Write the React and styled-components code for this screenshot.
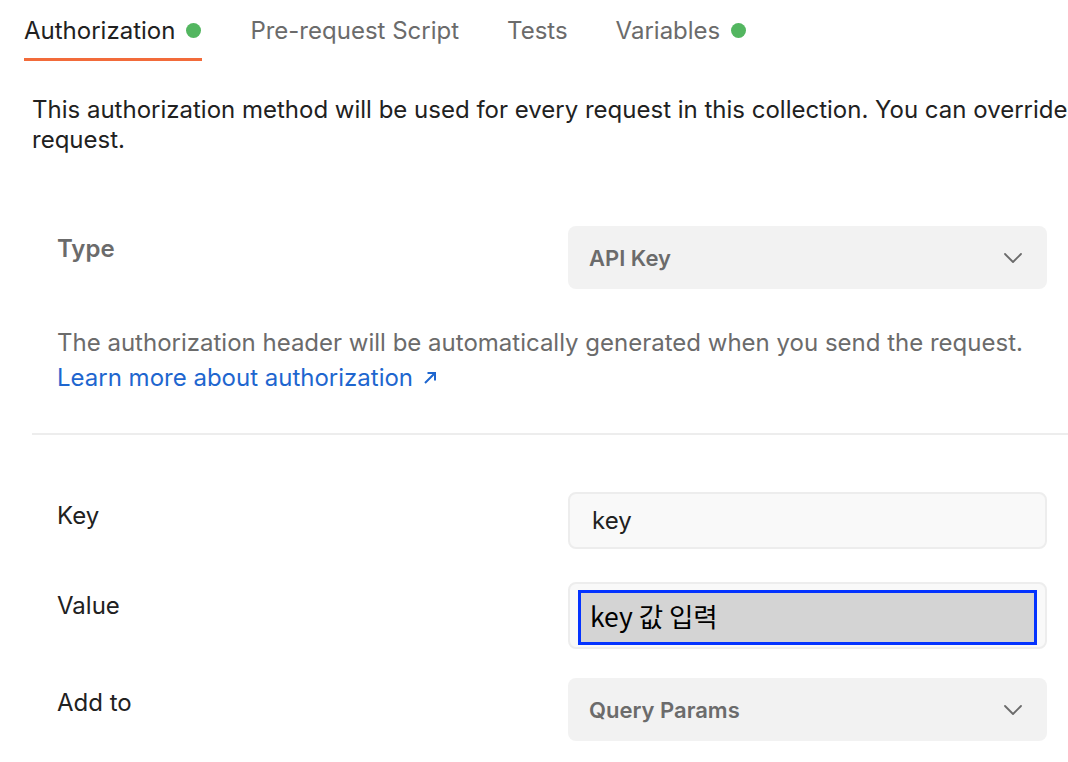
import React from "react";
import styled, { createGlobalStyle } from "styled-components";

const Global = createGlobalStyle`
  html, body { margin: 0; padding: 0; background: #ffffff; }
  body { overflow: hidden; width: 1068px; height: 762px; font-family: Inter, "Noto Sans", sans-serif; }
  * { box-sizing: border-box; }
`;

const Page = styled.div`
  width: 1068px;
  height: 762px;
  overflow: hidden;
  display: flex;
  flex-direction: column;
  color: #212121;
`;

const TabBar = styled.div`
  display: flex;
  align-items: flex-start;
  padding-left: 24px;
  height: 61px;
  gap: 48px;
`;

const Tab = styled.div`
  display: flex;
  align-items: center;
  gap: 11px;
  height: 61px;
  padding-top: 3px;
  padding-right: ${(p) => (p.$active ? 1 : 0)}px;
  font-size: 24px;
  color: ${(p) => (p.$active ? "#212121" : "#6b6b6b")};
  border-bottom: 3px solid ${(p) => (p.$active ? "#f26b3a" : "transparent")};
`;

const Dot = styled.span`
  width: 15px;
  height: 15px;
  border-radius: 50%;
  background: #53b660;
  flex: none;
`;

const Description = styled.div`
  margin-top: 34px;
  padding-left: 32px;
  font-size: 24px;
  line-height: 30px;
  white-space: nowrap;
  color: #212121;
`;

const Section = styled.div`
  margin-left: 32px;
  display: flex;
  flex-direction: column;
`;

const Row = styled.div`
  display: grid;
  grid-template-columns: 511px 479px;
  padding-left: 25px;
  margin-top: ${(p) => p.$mt || 0}px;
  align-items: start;
`;

const Label = styled.div`
  font-size: 24px;
  line-height: 30px;
  padding-top: ${(p) => p.$pt || 10}px;
  font-weight: ${(p) => (p.$bold ? 600 : 400)};
  color: ${(p) => (p.$bold ? "#6b6b6b" : "#212121")};
`;

const Select = styled.div`
  height: 63px;
  border-radius: 8px;
  background: #f2f2f2;
  display: flex;
  align-items: center;
  justify-content: space-between;
  padding: 0 24px 0 21px;
  font-size: 22px;
  font-weight: 600;
  color: #6b6b6b;
`;

const Input = styled.div`
  height: 57px;
  border-radius: 8px;
  background: #f9f9f9;
  border: 2px solid #ededed;
  display: flex;
  align-items: center;
  padding: 0 0 0 22px;
  font-size: 24px;
  color: #212121;
`;

const FocusInput = styled.div`
  height: 67px;
  border-radius: 8px;
  background: #f9f9f9;
  border: 2px solid #ededed;
  padding: 6px 8px 2px 8px;
  display: flex;
`;

const Focused = styled.div`
  flex: 1;
  background: #d4d4d4;
  border: 3px solid #0433ff;
  display: flex;
  align-items: center;
  padding: 0 0 4px 9px;
  font-family: "Noto Sans CJK KR", "Noto Sans", sans-serif;
  font-size: 26.5px;
  color: #000000;
`;

const Help = styled.div`
  padding-left: 25px;
  margin-top: 36px;
  font-size: 24px;
  line-height: 35px;
  color: #6b6b6b;
  white-space: nowrap;
`;

const Link = styled.a`
  display: inline-flex;
  align-items: center;
  gap: 10px;
  color: #1e66cf;
  text-decoration: none;
`;

const Divider = styled.div`
  height: 2px;
  background: #ededed;
  margin-top: 38px;
`;

const Chevron = () => (
  <svg width="20" height="12" viewBox="0 0 20 12" fill="none">
    <path d="M2 2 L10 10 L18 2" stroke="#6b6b6b" strokeWidth="1.8" strokeLinecap="round" strokeLinejoin="round" />
  </svg>
);

const ArrowUR = () => (
  <svg width="14" height="14" viewBox="0 0 14 14" fill="none">
    <path d="M2 12 L12 2 M4.5 2 H12 V9.5" stroke="#1e66cf" strokeWidth="2" />
  </svg>
);

export default function App() {
  return (
    <Page>
      <Global />
      <TabBar>
        <Tab $active>
          <span>Authorization</span>
          <Dot />
        </Tab>
        <Tab><span>Pre-request Script</span></Tab>
        <Tab><span>Tests</span></Tab>
        <Tab>
          <span>Variables</span>
          <Dot />
        </Tab>
      </TabBar>
      <Description>
        This authorization method will be used for every request in this collection. You can override
        <br />
        request.
      </Description>
      <Section>
        <Row $mt={71}>
          <Label $bold $pt={8}>Type</Label>
          <Select>
            <span>API Key</span>
            <Chevron />
          </Select>
        </Row>
        <Help>
          The authorization header will be automatically generated when you send the request.
          <br />
          <Link href="#">
            Learn more about authorization
            <ArrowUR />
          </Link>
        </Help>
        <Divider />
        <Row $mt={57}>
          <Label $pt={9}>Key</Label>
          <Input>key</Input>
        </Row>
        <Row $mt={33}>
          <Label $pt={9}>Value</Label>
          <FocusInput>
            <Focused>key 값 입력</Focused>
          </FocusInput>
        </Row>
        <Row $mt={29}>
          <Label $pt={10}>Add to</Label>
          <Select>
            <span>Query Params</span>
            <Chevron />
          </Select>
        </Row>
      </Section>
    </Page>
  );
}
